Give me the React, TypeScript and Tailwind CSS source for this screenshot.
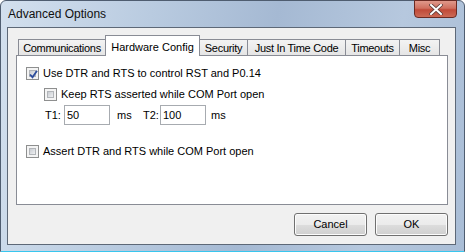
import React from "react";

const font = { fontFamily: '"Liberation Sans", Arial, sans-serif' };

function CheckBox({ checked }: { checked?: boolean }) {
  return (
    <div className="relative w-[13px] h-[13px] shrink-0 border border-[#8e8f8f] bg-[#f4f4f4] p-[2px]">
      <div className="w-full h-full bg-[linear-gradient(135deg,#c9ccd1,#eef0f2)] border border-[#b2b5b9]" />
      {checked && (
        <svg className="absolute left-[1px] top-[1px]" width="11" height="11" viewBox="0 0 11 11">
          <path d="M2 5.5 L4.5 8.2 L9 1.8" fill="none" stroke="#2d4d9c" strokeWidth="1.8" />
        </svg>
      )}
    </div>
  );
}

function Tab({ label, w, selected }: { label: string; w: number; selected?: boolean }) {
  if (selected) {
    return (
      <div
        className="relative z-10 -ml-px -mb-px h-[21px] flex items-start justify-center pt-[3px] bg-white border border-b-0 border-[#898c95] whitespace-nowrap"
        style={{ width: w }}
      >
        {label}
      </div>
    );
  }
  return (
    <div
      className="-ml-px h-[16px] flex items-center justify-center pt-px bg-[linear-gradient(#f3f3f3,#e5e5e5)] border border-b-0 border-[#898c95] whitespace-nowrap tracking-[-0.3px]"
      style={{ width: w }}
    >
      {label}
    </div>
  );
}

function TextBox({ value }: { value: string }) {
  return (
    <div className="w-[46px] h-[20px] border border-[#a7abb0] bg-white flex items-center pl-[2px]">
      {value}
    </div>
  );
}

function Button({ label }: { label: string }) {
  return (
    <div className="w-[73px] h-[23px] rounded-[3px] border border-[#707070] bg-[linear-gradient(#f2f2f2_0%,#ebebeb_50%,#dddddd_51%,#cfcfcf_100%)] flex items-center justify-center shadow-[inset_0_0_0_1px_#fcfcfc]">
      {label}
    </div>
  );
}

export default function App() {
  return (
    <div className="w-[465px] h-[252px] overflow-hidden bg-white" style={font}>
      <div className="w-[465px] h-[252px] flex flex-col border border-[#4f5d70] rounded-t-[6px] bg-[linear-gradient(100deg,#d3e0ee_0%,#b9cbe0_30%,#a5b9d3_55%,#b6c8de_80%,#a9bdd6_100%)] relative">
        {/* title bar */}
        <div className="h-[26px] flex items-start pl-[7px] pt-[4px] text-[12px] text-[#101010]">
          Advanced Options
        </div>
        {/* close button */}
        <div className="absolute right-[7px] top-[-1px] w-[43px] h-[18px] rounded-b-[4px] border border-[#6a2a22] bg-[linear-gradient(#e0998b_0%,#d0705f_45%,#c04a38_55%,#cc6a55_100%)] flex items-center justify-center">
          <svg width="14" height="11" viewBox="0 0 14 11">
            <path d="M2 1 L12 10 M12 1 L2 10" stroke="#5a3a36" strokeWidth="3.6" strokeLinecap="square" />
            <path d="M2 1 L12 10 M12 1 L2 10" stroke="#ffffff" strokeWidth="2" strokeLinecap="square" />
          </svg>
        </div>
        {/* client area */}
        <div className="flex-1 ml-[6px] mr-[8px] mb-[6px] border border-[#5d6877] bg-[#f0f0f0] flex flex-col pl-[8px] pr-[7px] pt-[7px] text-[11px] text-black">
          {/* tabs */}
          <div className="h-[20px] flex items-end pl-[3px]">
            <Tab label="Communications" w={88} />
            <Tab label="Hardware Config" w={95} selected />
            <Tab label="Security" w={49} />
            <Tab label="Just In Time Code" w={99} />
            <Tab label="Timeouts" w={55} />
            <Tab label="Misc" w={41} />
          </div>
          {/* panel */}
          <div className="h-[150px] border border-[#898c95] bg-white flex flex-col pl-[9px]">
            <div className="mt-[11px] h-[13px] flex items-center gap-[4px]">
              <CheckBox checked />
              <span>Use DTR and RTS to control RST and P0.14</span>
            </div>
            <div className="mt-[8px] h-[13px] flex items-center gap-[4px] pl-[18px]">
              <CheckBox />
              <span>Keep RTS asserted while COM Port open</span>
            </div>
            <div className="mt-[4px] h-[20px] flex items-center pl-[19px]">
              <span className="w-[19px]">T1:</span>
              <TextBox value="50" />
              <span className="ml-[7px] w-[26px]">ms</span>
              <span className="w-[17px]">T2:</span>
              <TextBox value="100" />
              <span className="ml-[5px]">ms</span>
            </div>
            <div className="mt-[20px] h-[13px] flex items-center gap-[4px]">
              <CheckBox />
              <span>Assert DTR and RTS while COM Port open</span>
            </div>
          </div>
          {/* buttons */}
          <div className="mt-[8px] flex justify-end gap-[8px]">
            <Button label="Cancel" />
            <Button label="OK" />
          </div>
        </div>
        <div className="absolute left-0 right-0 bottom-[-1px] h-[1px] bg-[#38c6ee]" />
      </div>
    </div>
  );
}
